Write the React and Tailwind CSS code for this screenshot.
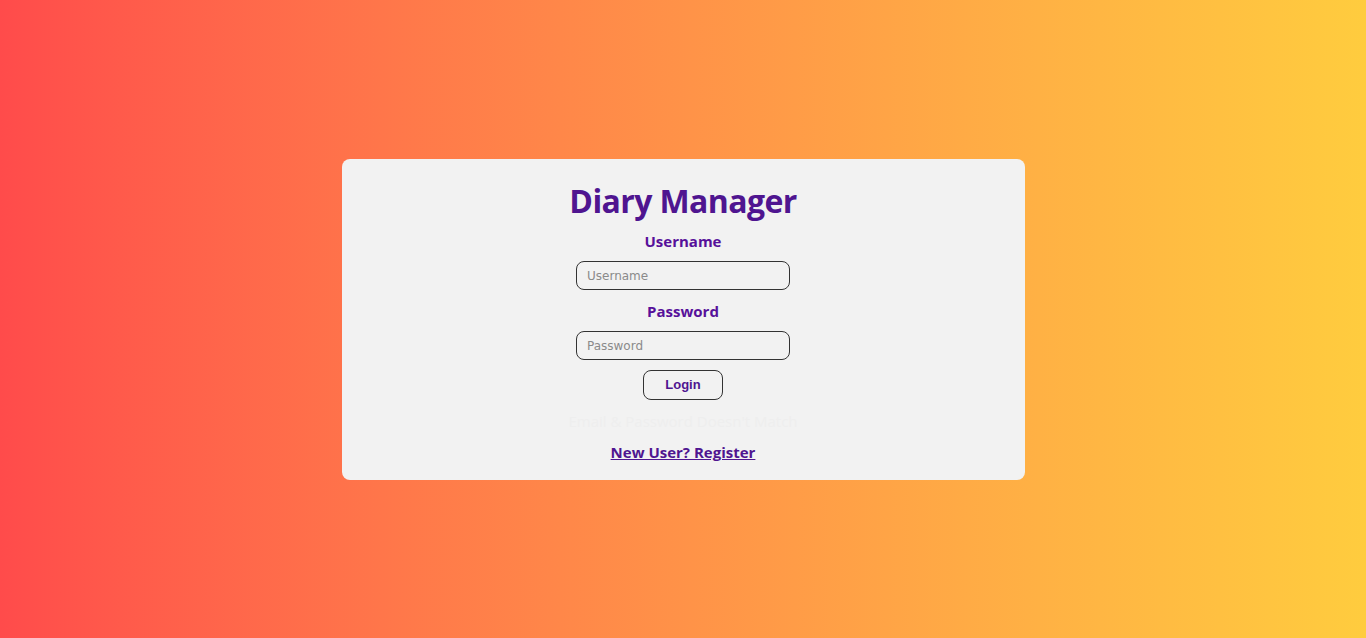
import React, { useState } from 'react';

const App = () => {
  const [username, setUsername] = useState('');
  const [password, setPassword] = useState('');
  const [error] = useState("Email & Password Doesn't Match");

  return (
    <div className="min-h-screen w-full bg-gradient-to-r from-[#ff4b4b] to-[#ffcc3e] flex items-center justify-center font-['Open_Sans',sans-serif]">
      <div className="w-[683px] h-[321px] bg-[#f2f2f2] rounded-lg flex flex-col items-center pt-[20px]">
        <h1 className="text-[32px] leading-[44px] font-bold text-[#4f1590] tracking-[-0.6px]">Diary Manager</h1>

        <label className="mt-[7px] text-[15px] leading-[22px] font-bold text-[#57109a]">Username</label>
        <input
          value={username}
          onChange={(e) => setUsername(e.target.value)}
          placeholder="Username"
          className="mt-[9px] w-[214px] h-[29px] px-[10px] pt-[2px] rounded-lg border border-[#333] bg-transparent text-[12px] font-['DejaVu_Sans',sans-serif] placeholder:text-[#8a8a8a] outline-none"
        />

        <label className="mt-[10px] text-[15px] leading-[22px] font-bold text-[#57109a]">Password</label>
        <input
          type="password"
          value={password}
          onChange={(e) => setPassword(e.target.value)}
          placeholder="Password"
          className="mt-[9px] w-[214px] h-[29px] px-[10px] pt-[2px] rounded-lg border border-[#333] bg-transparent text-[12px] font-['DejaVu_Sans',sans-serif] placeholder:text-[#8a8a8a] outline-none"
        />

        <button className="mt-[10px] w-[80px] h-[30px] rounded-lg border border-[#333] text-[13px] font-bold text-[#4f1590] font-['Liberation_Sans',sans-serif]">
          Login
        </button>

        <p className="mt-[10px] text-[15px] leading-[22px] text-[#eeeeee]">{error}</p>

        <a href="#" className="mt-[9px] text-[15px] leading-[22px] font-bold text-[#4f1590] underline">
          New User? Register
        </a>
      </div>
    </div>
  );
};

export default App;
